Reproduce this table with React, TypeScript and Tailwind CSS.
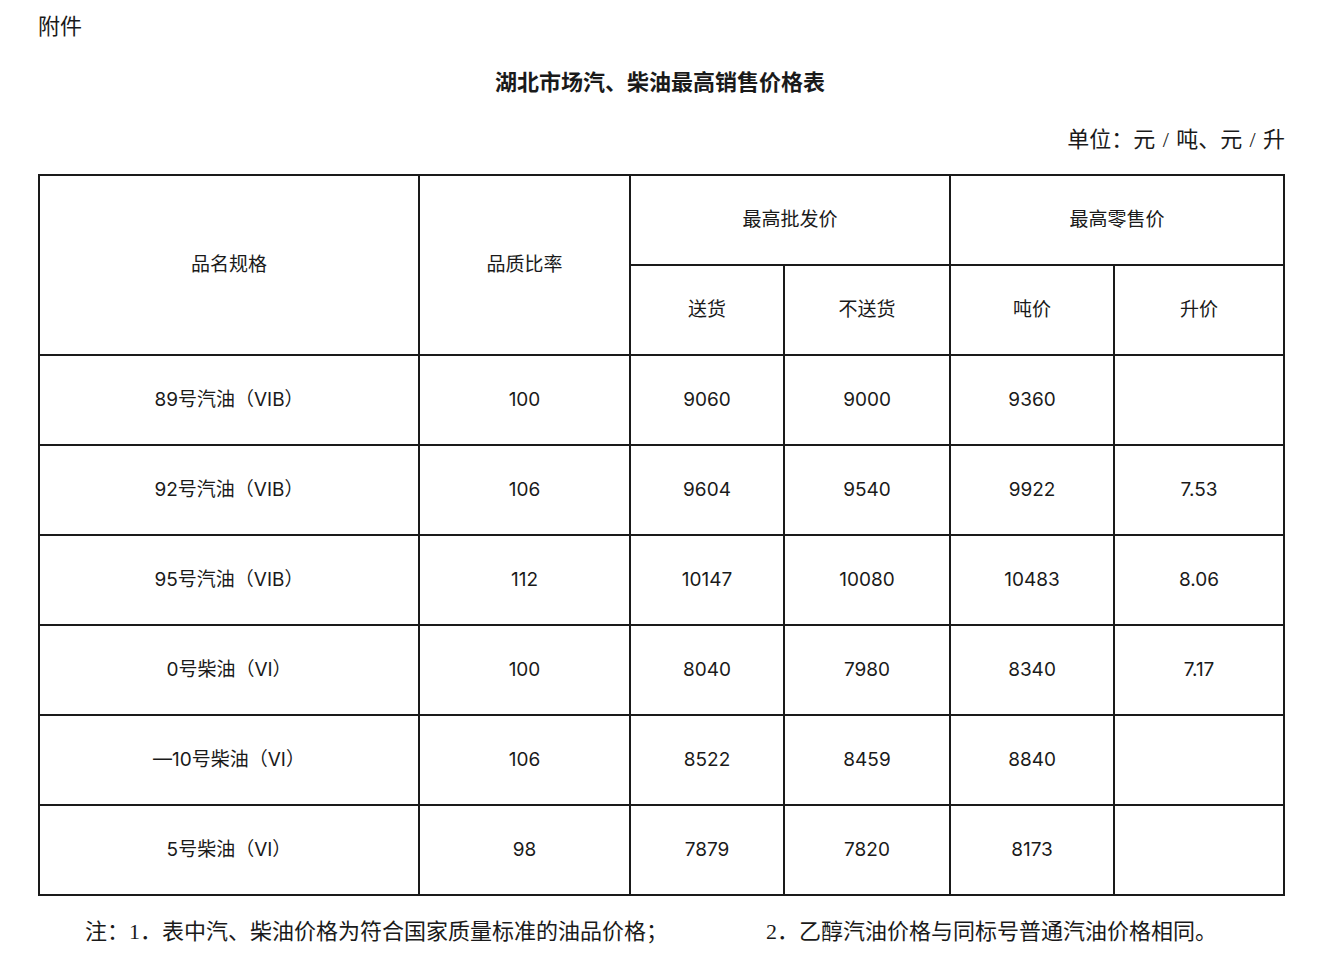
import React from 'react';

const rows = [
  { name: '89号汽油（VIB）', ratio: '100', deliver: '9060', pickup: '9000', ton: '9360', litre: '' },
  { name: '92号汽油（VIB）', ratio: '106', deliver: '9604', pickup: '9540', ton: '9922', litre: '7.53' },
  { name: '95号汽油（VIB）', ratio: '112', deliver: '10147', pickup: '10080', ton: '10483', litre: '8.06' },
  { name: '0号柴油（VI）', ratio: '100', deliver: '8040', pickup: '7980', ton: '8340', litre: '7.17' },
  { name: '—10号柴油（VI）', ratio: '106', deliver: '8522', pickup: '8459', ton: '8840', litre: '' },
  { name: '5号柴油（VI）', ratio: '98', deliver: '7879', pickup: '7820', ton: '8173', litre: '' },
];

const cell = 'border-2 border-[#1a1a1a] text-center align-middle font-normal';
const serif = "font-['Liberation_Serif','Noto_Sans_CJK_SC',serif]";

export default function App() {
  return (
    <div className="w-[1336px] h-[956px] bg-white text-[#1a1a1a] overflow-hidden">
      <div className="pl-[38px] pr-[51px] pt-[12px]">
        <p className={`text-[22px] leading-[30px] ${serif}`}>附件</p>

        <h1 className={`mt-[26px] text-center text-[22px] leading-[30px] font-bold pr-[3px] ${serif}`}>
          湖北市场汽、柴油最高销售价格表
        </h1>

        <p className={`mt-[27px] text-right text-[22px] leading-[30px] ${serif}`}>
          单位：元{'\u2004/\u2004'}吨、元{'\u2004/\u2004'}升
        </p>

        <table className="mt-[19px] w-[1245px] border-collapse table-fixed text-[19px] font-['Inter','Noto_Sans_CJK_SC',sans-serif]">
          <colgroup>
            <col className="w-[380px]" />
            <col className="w-[211px]" />
            <col className="w-[154px]" />
            <col className="w-[166px]" />
            <col className="w-[164px]" />
            <col className="w-[170px]" />
          </colgroup>
          <thead>
            <tr className="h-[90px]">
              <th rowSpan={2} className={cell}>品名规格</th>
              <th rowSpan={2} className={cell}>品质比率</th>
              <th colSpan={2} className={cell}>最高批发价</th>
              <th colSpan={2} className={cell}>最高零售价</th>
            </tr>
            <tr className="h-[90px]">
              <th className={cell}>送货</th>
              <th className={cell}>不送货</th>
              <th className={cell}>吨价</th>
              <th className={cell}>升价</th>
            </tr>
          </thead>
          <tbody>
            {rows.map((r) => (
              <tr key={r.name} className="h-[90px]">
                <td className={cell}>{r.name}</td>
                <td className={cell}>{r.ratio}</td>
                <td className={cell}>{r.deliver}</td>
                <td className={cell}>{r.pickup}</td>
                <td className={cell}>{r.ton}</td>
                <td className={cell}>{r.litre}</td>
              </tr>
            ))}
          </tbody>
        </table>

        <div className={`mt-[21px] flex text-[22px] leading-[30px] ${serif}`}>
          <p className="ml-[47px] w-[681px]">注：1．表中汽、柴油价格为符合国家质量标准的油品价格；</p>
          <p>2．乙醇汽油价格与同标号普通汽油价格相同。</p>
        </div>
      </div>
    </div>
  );
}
